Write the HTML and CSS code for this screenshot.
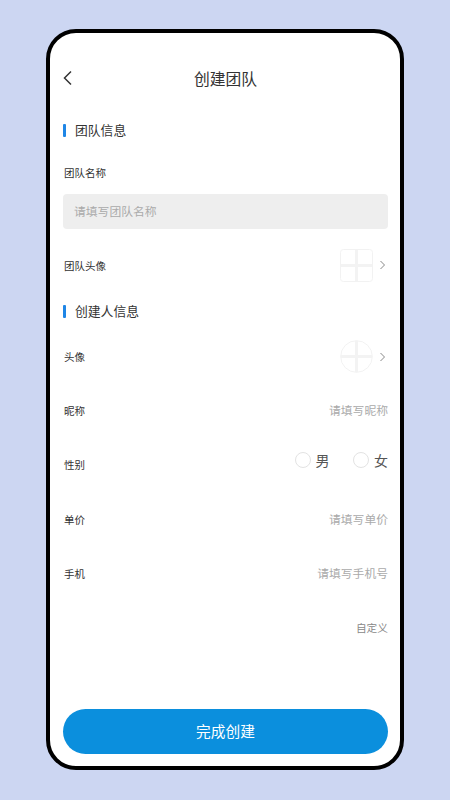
FILE: index.html
```html
<!DOCTYPE html>
<html lang="zh">
<head>
<meta charset="utf-8">
<title>创建团队</title>
<link rel="stylesheet" href="styles.css">
</head>
<body>
<main class="phone">
  <header class="nav">
    <svg class="back" width="12" height="18" viewBox="0 0 12 18"><path d="M8 2.500 1.500 9 8 15.500" fill="none" stroke="#333" stroke-width="1.500"/></svg>
    <h1 class="title">创建团队</h1>
  </header>
  <h2 class="section first">团队信息</h2>
  <div class="name-label">团队名称</div>
  <div class="input">请填写团队名称</div>
  <div class="row team-row">
    <span class="label">团队头像</span>
    <span class="right">
      <svg class="pic" width="33" height="33" viewBox="0 0 34 34"><rect x=".5" y=".5" width="33" height="33" rx="3" fill="#fff" stroke="#f2f2f2"/><path d="M17 1v32M1 17h32" stroke="#f3f3f3" stroke-width="3"/></svg>
      <svg class="chev" width="8" height="12" viewBox="0 0 8 12"><path d="M1.500 2 5.500 6l-4 4" fill="none" stroke="#888" stroke-width="1"/></svg>
    </span>
  </div>
  <h2 class="section second">创建人信息</h2>
  <div class="row avatar-row">
    <span class="label">头像</span>
    <span class="right">
      <svg class="pic" width="33" height="33" viewBox="0 0 34 34"><circle cx="17" cy="17" r="16.300" fill="#fff" stroke="#f2f2f2"/><path d="M17 1v32M1 17h32" stroke="#f3f3f3" stroke-width="3"/></svg>
      <svg class="chev" width="8" height="12" viewBox="0 0 8 12"><path d="M1.500 2 5.500 6l-4 4" fill="none" stroke="#888" stroke-width="1"/></svg>
    </span>
  </div>
  <div class="row"><span class="label">昵称</span><span class="hint">请填写昵称</span></div>
  <div class="row">
    <span class="label">性别</span>
    <span class="radios">
      <span class="radio"><i class="dot"></i>男</span>
      <span class="radio"><i class="dot"></i>女</span>
    </span>
  </div>
  <div class="row"><span class="label">单价</span><span class="hint">请填写单价</span></div>
  <div class="row"><span class="label">手机</span><span class="hint">请填写手机号</span></div>
  <div class="row"><span></span><span class="custom">自定义</span></div>
  <button class="submit">完成创建</button>
</main>
</body>
</html>
```
FILE: styles.css
```css
* { box-sizing: border-box; }
html, body { margin: 0; height: 800px; overflow: hidden; }
body {
  background: #ccd6f2;
  padding: 29px 46px 30px;
  font-family: "Noto Sans CJK SC", "Noto Sans", sans-serif;
}
.phone {
  width: 358px;
  height: 741px;
  background: #fff;
  border: 4px solid #000;
  border-radius: 30px;
  padding: 0 12px 0 13px;
  display: flex;
  flex-direction: column;
}
.nav {
  height: 46px;
  margin-top: 22px;
  display: flex;
  align-items: center;
  justify-content: center;
  position: relative;
}
.back { position: absolute; left: 0; top: 13.500px; }
.title { margin: 0; font-size: 15.800px; font-weight: 400; color: #333; }
.section {
  margin: 0;
  height: 20px;
  line-height: 20px;
  font-size: 12.800px;
  font-weight: 400;
  color: #333;
  padding-left: 12px;
  position: relative;
}
.section::before {
  content: "";
  position: absolute;
  left: 0;
  top: 3.500px;
  width: 3px;
  height: 13px;
  border-radius: 1px;
  background: #1f86e6;
}
.section.first { margin-top: 19px; }
.section.second { margin-top: 9px; }
.name-label { margin-top: 25px; height: 16px; line-height: 16px; font-size: 10.500px; color: #333; padding-left: 1px; }
.input {
  margin-top: 13px;
  height: 35px;
  line-height: 34px;
  background: #eee;
  border-radius: 4px;
  padding-left: 11px;
  font-size: 11.800px;
  color: #aaa;
}
.row {
  height: 54.400px;
  display: flex;
  align-items: center;
  justify-content: space-between;
}
.team-row { margin-top: 9px; height: 54px; }
.avatar-row { margin-top: 8px; }
.label { font-size: 10.500px; color: #333; padding-left: 1px; }
.right { display: flex; align-items: center; gap: 5.500px; margin-right: 1.500px; }
.avatar-row .right { margin-top: 1px; }
.hint { font-size: 11.800px; color: #aaa; margin-bottom: 2px; }
.custom { font-size: 10.700px; color: #888; margin-bottom: 2px; }
.radios { display: flex; gap: 23.500px; font-size: 14px; color: #555; margin-top: -10px; }
.radio { display: flex; align-items: center; gap: 5px; }
.dot { width: 16px; height: 16px; border: 1px solid #e3e3e3; border-radius: 50%; background: #fff; }
.submit {
  margin-top: auto;
  margin-bottom: 12px;
  height: 45px;
  flex: none;
  border: 0;
  border-radius: 23px;
  background: #0b8fdd;
  color: #fff;
  font: inherit;
  font-size: 14.700px;
  padding: 0 0 3px;
}
```
